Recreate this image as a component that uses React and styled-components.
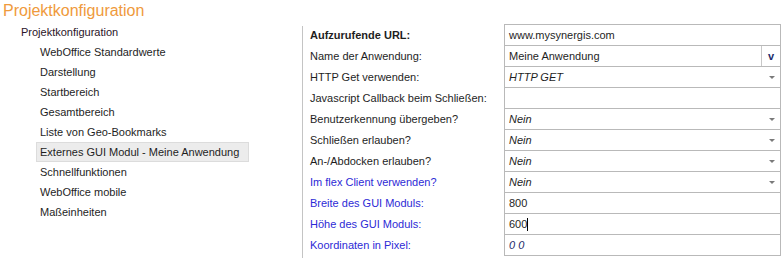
import React from 'react';
import styled, { createGlobalStyle } from 'styled-components';

const GlobalStyle = createGlobalStyle`
    body {
        margin: 0;
        background: #fff;
        font-family: "Liberation Sans", Arial, sans-serif;
        font-size: 11px;
        color: #1e1e1e;
    }
`;

const treeItems = [
    'WebOffice Standardwerte',
    'Darstellung',
    'Startbereich',
    'Gesamtbereich',
    'Liste von Geo-Bookmarks',
    'Externes GUI Modul - Meine Anwendung',
    'Schnellfunktionen',
    'WebOffice mobile',
    'Maßeinheiten',
];

const fields = [
    { label: 'Aufzurufende URL:', bold: true, value: 'www.mysynergis.com' },
    { label: 'Name der Anwendung:', value: 'Meine Anwendung', button: true },
    { label: 'HTTP Get verwenden:', value: 'HTTP GET', italic: true, select: true },
    { label: 'Javascript Callback beim Schließen:', value: '' },
    { label: 'Benutzerkennung übergeben?', value: 'Nein', italic: true, select: true },
    { label: 'Schließen erlauben?', value: 'Nein', italic: true, select: true },
    { label: 'An-/Abdocken erlauben?', value: 'Nein', italic: true, select: true },
    { label: 'Im flex Client verwenden?', blue: true, value: 'Nein', italic: true, select: true },
    { label: 'Breite des GUI Moduls:', blue: true, value: '800' },
    { label: 'Höhe des GUI Moduls:', blue: true, value: '600', caret: true },
    { label: 'Koordinaten in Pixel:', blue: true, value: '0 0', italic: true, dark: true },
];

export default function App() {
    return (
        <Page>
            <GlobalStyle />
            <Title>Projektkonfiguration</Title>
            <Body>
                <Tree>
                    <RootItem>Projektkonfiguration</RootItem>
                    {treeItems.map((item, i) => (
                        <TreeItem key={item} $selected={i === 5}>{item}</TreeItem>
                    ))}
                </Tree>
                <Panel>
                    <Form>
                        {fields.map((f, i) => (
                            <React.Fragment key={f.label}>
                                <Label $bold={f.bold} $blue={f.blue}>{f.label}</Label>
                                <Field $last={i === fields.length - 1}>
                                    <Value $italic={f.italic} $dark={f.dark}>
                                        {f.value}
                                        {f.caret && <Caret />}
                                    </Value>
                                    {f.select && <Arrow />}
                                    {f.button && <VButton>v</VButton>}
                                </Field>
                            </React.Fragment>
                        ))}
                    </Form>
                </Panel>
            </Body>
        </Page>
    );
}

const Page = styled.div`
    width: 783px;
    height: 258px;
    overflow: hidden;
`;

const Title = styled.div`
    height: 22px;
    padding-left: 3px;
    font-size: 16px;
    line-height: 22px;
    color: #ef9a3c;
`;

const Body = styled.div`
    display: flex;
    height: 236px;
`;

const Tree = styled.div`
    width: 302px;
    flex-shrink: 0;
`;

const RootItem = styled.div`
    height: 20px;
    line-height: 20px;
    padding-left: 21px;
    color: #2a1428;
`;

const TreeItem = styled.div`
    display: table;
    height: 18px;
    line-height: 18px;
    margin-left: 36px;
    padding: 0 9px 0 3px;
    border: 1px solid ${p => (p.$selected ? '#dcdcdc' : 'transparent')};
    background: ${p => (p.$selected ? '#ececec' : 'transparent')};
    color: #1e1e1e;
`;

const Panel = styled.div`
    margin-top: 4px;
    border-left: 1px solid #c4c4c4;
    padding-left: 7px;
    flex: 1;
`;

const Form = styled.div`
    display: grid;
    grid-template-columns: 194px 277px;
    grid-auto-rows: 21px;
    margin-top: -2px;
`;

const Label = styled.div`
    line-height: 22px;
    white-space: nowrap;
    font-weight: ${p => (p.$bold ? 700 : 400)};
    color: ${p => (p.$blue ? '#2d2ad6' : '#1e1e1e')};
`;

const Field = styled.div`
    display: flex;
    align-items: center;
    border: 1px solid #b9b9b9;
    border-bottom: ${p => (p.$last ? '1px solid #b9b9b9' : 'none')};
    box-sizing: border-box;
    height: ${p => (p.$last ? '22px' : '21px')};
    padding-left: 4px;
`;

const Value = styled.span`
    flex: 1;
    display: flex;
    align-items: center;
    font-style: ${p => (p.$italic ? 'italic' : 'normal')};
    color: ${p => (p.$dark ? '#1c2a6a' : '#1e1e1e')};
`;

const Caret = styled.span`
    display: inline-block;
    width: 1px;
    height: 13px;
    background: #000;
`;

const Arrow = styled.span`
    width: 0;
    height: 0;
    margin-right: 5px;
    border-left: 3px solid transparent;
    border-right: 3px solid transparent;
    border-top: 3px solid #7a7a7a;
`;

const VButton = styled.span`
    align-self: stretch;
    width: 18px;
    border-left: 1px solid #c8c8c8;
    display: flex;
    align-items: center;
    justify-content: center;
    font-weight: 700;
    color: #1c2a6a;
`;
